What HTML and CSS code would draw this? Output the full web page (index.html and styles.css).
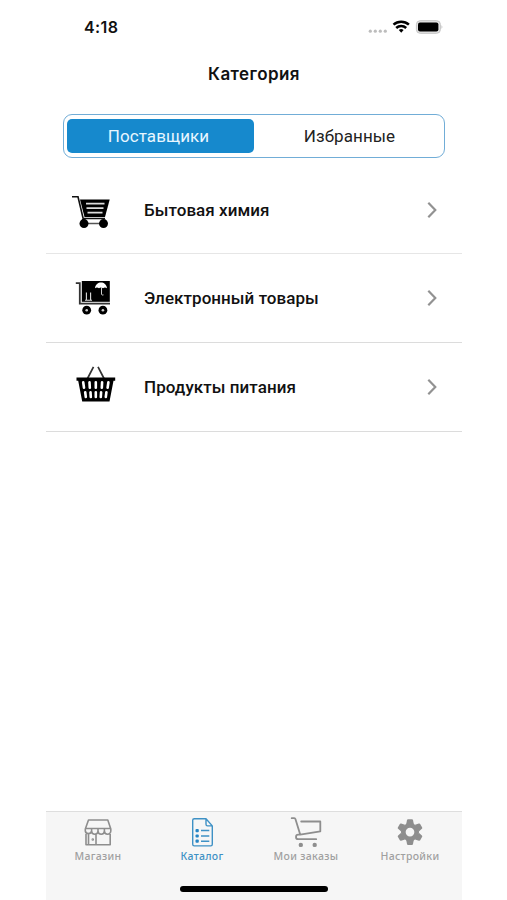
FILE: index.html
```html
<!DOCTYPE html>
<html lang="ru">
<head>
<meta charset="utf-8">
<title>Категория</title>
<link rel="stylesheet" href="styles.css">
</head>
<body>
<div class="phone">
  <header class="status">
    <span class="time">4:18</span>
    <svg class="indicators" width="76" height="16" viewBox="0 0 76 16">
      <g fill="#bdbdbd"><circle cx="2.3" cy="12.2" r="1.6"/><circle cx="7.3" cy="12.2" r="1.6"/><circle cx="12.3" cy="12.2" r="1.6"/><circle cx="17.3" cy="12.2" r="1.6"/></g>
      <g fill="none" stroke="#000" stroke-width="2.5"><path d="M25.5 5.7a11.4 11.4 0 0 1 15.4 0"/><path d="M28.2 9a7.4 7.4 0 0 1 10 0"/></g>
      <path d="M30.8 11a3.7 3.7 0 0 1 4.8 0L33.2 13.8z" fill="#000"/>
      <rect x="48.4" y="1.7" width="24" height="12.6" rx="3.8" fill="#e4e4e4" stroke="#c4c4c4"/>
      <rect x="50" y="3.4" width="20.4" height="9.2" rx="2" fill="#000"/>
      <path d="M73.6 6q1.6 2 0 4z" fill="#aaa"/>
    </svg>
  </header>
  <h1 class="title">Категория</h1>
  <div class="segment">
    <button class="segment-item active">Поставщики</button>
    <button class="segment-item">Избранные</button>
  </div>
  <ul class="list">
    <li class="row">
      <svg class="row-icon" width="48" height="48" viewBox="0 0 48 48">
        <path d="M4 10.7h6L15.5 34M13 36.5l2.5-4H37" fill="none" stroke="#111" stroke-width="1.6"/>
        <path d="M12 13.5H41.7L37 31H16.5z"/>
        <path d="M18 17.7h18.5M18.5 22.2h17M19.5 26.7h15" stroke="#ddd" stroke-width="1.7"/>
        <path d="M16 37.5h20" stroke="#555" stroke-width="1.5"/>
        <circle cx="16" cy="37.6" r="4.5"/><circle cx="35.5" cy="37.6" r="4.5"/>
      </svg>
      <span class="row-label">Бытовая химия</span>
      <svg class="chevron" width="12" height="20" viewBox="0 0 12 20"><path d="M2.3 2.7L9.3 10 2.3 17.3"/></svg>
    </li>
    <li class="row">
      <svg class="row-icon" width="48" height="48" viewBox="0 0 48 48">
        <path d="M7.8 9.2h4v20.5H42" fill="none" stroke="#333" stroke-width="1.8"/>
        <rect x="13.8" y="7" width="28" height="20.8"/>
        <path d="M27 14.2c.8-7.5 11.2-7.5 12 0-1.5-1-2.7-1-4 0-1.2-1-2.8-1-4 0-1.3-1-2.7-1-4 0z" fill="#fff"/>
        <path d="M33.5 13v7.2q.3 1.4 2 .7" fill="none" stroke="#ccc"/>
        <path d="M18.4 26V18.5M22.6 26V18.5M17 26.2h7" stroke="#ddd" stroke-width="1.1"/>
        <circle cx="18.7" cy="36.2" r="4.4"/><circle cx="34.9" cy="36.2" r="4.4"/>
        <circle cx="18.7" cy="36.2" r="1.3" fill="#ccc"/><circle cx="34.9" cy="36.2" r="1.3" fill="#ccc"/>
      </svg>
      <span class="row-label">Электронный товары</span>
      <svg class="chevron" width="12" height="20" viewBox="0 0 12 20"><path d="M2.3 2.7L9.3 10 2.3 17.3"/></svg>
    </li>
    <li class="row">
      <svg class="row-icon" width="48" height="48" viewBox="0 0 48 48">
        <path d="M19.5 15.5L25.5 3.8M36 15.5L30 3.8" stroke="#333" stroke-width="1.7"/>
        <path d="M8.5 14.5H47.2V17.7H45.5L41.5 38.4H14.2L10.2 17.7H8.5z"/>
        <path d="M15.2 19.2l.8 5.6M21.5 19.2l.3 5.6M27.8 19.2v5.6M34.1 19.2l-.3 5.6M40.4 19.2l-.8 5.6M17.2 29.2l.6 4.8M22.5 29.2l.3 4.8M27.8 29.2V34M33.1 29.2l-.3 4.8M38.4 29.2l-.6 4.8" stroke="#fff" stroke-width="2.6" stroke-linecap="round"/>
      </svg>
      <span class="row-label">Продукты питания</span>
      <svg class="chevron" width="12" height="20" viewBox="0 0 12 20"><path d="M2.3 2.7L9.3 10 2.3 17.3"/></svg>
    </li>
  </ul>
  <nav class="tabbar">
    <div class="tabs">
      <a class="tab">
        <svg width="32" height="32" viewBox="0 0 32 32" fill="none" stroke="#8e8e8e" stroke-width="1.6" stroke-linejoin="round">
          <path d="M6.5 4h19.3l3 9v2a3.2 3.2 0 0 1-6.4 0 3.2 3.2 0 0 1-6.4 0 3.2 3.2 0 0 1-6.4 0 3.2 3.2 0 0 1-6.3 0v-2zM3.3 12.5h25.5M4 18v10.8h24.2V18M6.5 18.5v10.2M14 18v10.8M9.6 12.5V15M16 12.5V15M22.4 12.5V15"/>
          <circle cx="10.8" cy="23.5" r=".5"/>
        </svg>
        <span>Магазин</span>
      </a>
      <a class="tab current">
        <svg width="32" height="32" viewBox="0 0 32 32" fill="none" stroke="#3e91c5" stroke-width="1.4" stroke-linejoin="round">
          <path d="M8.3 2.7H20l6.3 7.2v18.4q0 1.6-1.6 1.6H8.3q-1.6 0-1.6-1.6V4.3q0-1.6 1.6-1.6zM20 2.7v5.6q0 1.6 1.6 1.6h4.7"/>
          <path d="M15 14.5h8.3M15 20h8.3M15 25.2h8.3"/>
          <g fill="#2585c5" stroke="none"><rect x="9.5" y="13" width="3.3" height="3.2" rx="1"/><rect x="9.5" y="18.4" width="3.3" height="3.2" rx="1"/><rect x="9.5" y="23.6" width="3.3" height="3.2" rx="1"/></g>
        </svg>
        <span>Каталог</span>
      </a>
      <a class="tab">
        <svg width="32" height="32" viewBox="0 0 32 32" fill="none" stroke="#8e8e8e" stroke-width="1.8" stroke-linejoin="round" stroke-linecap="round">
          <path d="M1.7 2.2h2.6q.9 0 1.2 1L10.2 18.6 30.3 15.4V5.5H11.2M10.2 18.6H8.3a2.2 2.2 0 0 0 0 4.6h17.9"/>
          <g fill="#8e8e8e" stroke="none"><circle cx="10.8" cy="28.9" r="2.2"/><circle cx="24.7" cy="28.9" r="2.2"/></g>
        </svg>
        <span>Мои заказы</span>
      </a>
      <a class="tab">
        <svg width="32" height="32" viewBox="0 0 32 32">
          <g fill="#8e8e8e" transform="translate(16 16.1)">
            <path id="tooth" d="M-3.8-8L-3-12q.2-.9 1-.9h4q.8 0 1 .9L3.8-8z"/>
            <use href="#tooth" transform="rotate(60)"/><use href="#tooth" transform="rotate(120)"/><use href="#tooth" transform="rotate(180)"/><use href="#tooth" transform="rotate(240)"/><use href="#tooth" transform="rotate(300)"/>
            <circle r="6.7" fill="none" stroke="#8e8e8e" stroke-width="4.7"/>
          </g>
        </svg>
        <span>Настройки</span>
      </a>
    </div>
    <div class="home"></div>
  </nav>
</div>
</body>
</html>
```

FILE: styles.css
```css
* { box-sizing: border-box; }
body { margin: 0; background: #fff; color: #111; font-family: Roboto, sans-serif; }
.phone { width: 416px; height: 900px; margin-left: 46px; display: flex; flex-direction: column; }
.status { height: 54px; padding: 0 18px 0 38px; display: flex; align-items: center; justify-content: space-between; }
.time { font: 600 16px/20px Inter, sans-serif; letter-spacing: 0.4px; }
.indicators { display: block; }
.title { margin: 10px 0 0; height: 20px; font: 600 17px/20px Inter, sans-serif; text-align: center; letter-spacing: 0.42px; }
.segment { margin: 30px 17px 0; height: 44px; padding: 4px 3px; display: grid; grid-template-columns: 187px 1fr; border: 1.5px solid #71add7; border-radius: 9px; }
.segment-item { border: 0; padding: 0 0 0 4px; background: none; color: #222; font: 400 17px/20px Roboto, sans-serif; letter-spacing: 0.08px; border-radius: 5px; }
.segment-item.active { padding: 0 4px 0 0; background: #1689cd; color: #e8f6ff; }
.list { list-style: none; margin: 8px 0 0; padding: 0; }
.row { height: 89px; padding: 0 24px 0 22px; display: flex; align-items: center; border-bottom: 1px solid #dcdcdc; }
.row:first-child { height: 88px; border-color: #e6e6e6; }
.row-icon { margin-right: 28px; }
.row-label { flex: 1; font-size: 17px; line-height: 20px; font-weight: 500; letter-spacing: 0.06px; white-space: nowrap; }
.chevron { fill: none; stroke: #929292; stroke-width: 2.2; }
.tabbar { margin-top: auto; height: 89px; background: #f6f6f6; border-top: 1px solid #dedede; display: flex; flex-direction: column; align-items: center; }
.tabs { width: 100%; display: grid; grid-template-columns: repeat(4, 1fr); padding-top: 4px; }
.tab { display: flex; flex-direction: column; align-items: center; gap: 1px; font: 500 10.5px/14px "Noto Sans", sans-serif; color: #a0a0a0; letter-spacing: 0.32px; white-space: nowrap; }
.tab.current { color: #3e91c5; }
.home { margin-top: 23px; width: 148px; height: 6px; border-radius: 3px; background: #000; }
```
